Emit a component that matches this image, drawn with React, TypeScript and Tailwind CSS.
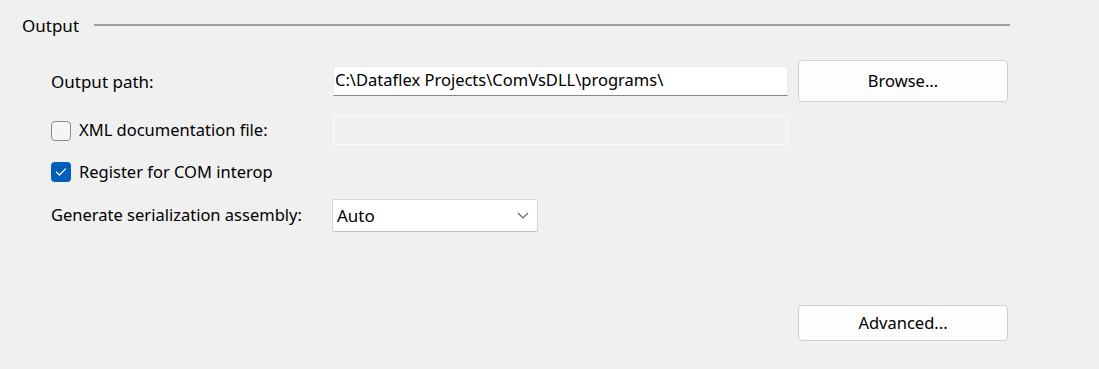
import React from "react";

const font = { fontFamily: '"Noto Sans", "Open Sans", sans-serif' };

export default function App() {
  return (
    <div
      className="w-[1099px] h-[369px] bg-[#f0f0f0] text-black text-[16.5px] leading-none relative overflow-hidden"
      style={font}
    >
      {/* Group header */}
      <div className="flex items-center pl-[22px] pr-[89px] pt-[17px] h-[36px]">
        <span className="leading-none -mt-[3px] text-[17px]">Output</span>
        <div className="flex-1 h-[2px] bg-[#a0a0a0] ml-[15px] -mt-[3px]" />
      </div>

      <div className="flex flex-col pl-[51px] mt-[24px]">
        {/* Row 1 */}
        <div className="flex items-center h-[42px]">
          <div className="w-[282px] text-[17px]">Output path:</div>
          <div className="w-[455px] h-[30px] bg-white border border-[#ececec] border-b-[#868686] flex items-center pl-[1px] -mt-[1px]">
            C:\Dataflex Projects\ComVsDLL\programs\
          </div>
          <button className="ml-[10px] w-[210px] h-[42px] bg-[#fdfdfd] border border-[#d0d0d0] rounded-[4px] flex items-center justify-center">
            Browse...
          </button>
        </div>

        {/* Row 2 */}
        <div className="flex items-center h-[29px] mt-[14px]">
          <div className="w-[282px] flex items-center">
            <div className="w-[20px] h-[20px] rounded-[4px] border border-[#8a8a8a] bg-[#f5f5f5]" />
            <span className="ml-[8px]">XML documentation file:</span>
          </div>
          <div className="w-[455px] h-[29px] border border-[#fbfbfb] bg-[#f0f0f0]" />
        </div>

        {/* Row 3 */}
        <div className="flex items-center h-[20px] mt-[17px]">
          <div className="w-[20px] h-[20px] rounded-[4px] bg-[#005fb8] flex items-center justify-center">
            <svg width="12" height="10" viewBox="0 0 12 10" fill="none">
              <path d="M1.5 5.2 L4.4 8 L10.5 1.8" stroke="white" strokeWidth="1.2" strokeLinecap="round" strokeLinejoin="round" />
            </svg>
          </div>
          <span className="ml-[8px]">Register for COM interop</span>
        </div>

        {/* Row 4 */}
        <div className="flex items-center h-[33px] mt-[17px]">
          <div className="w-[281px]">Generate serialization assembly:</div>
          <div className="w-[206px] h-[33px] bg-white border border-[#d6d6d6] border-b-[#c0c0c0] rounded-[2px] flex items-center justify-between pl-[4px] pr-[8px]">
            <span className="text-[17px]">Auto</span>
            <svg width="12" height="7" viewBox="0 0 12 7" fill="none">
              <path d="M1 1 L6 6 L11 1" stroke="#606060" strokeWidth="1.1" />
            </svg>
          </div>
        </div>

        {/* Advanced */}
        <div className="flex mt-[73px] pl-[747px]">
          <button className="w-[210px] h-[36px] bg-[#fdfdfd] border border-[#d0d0d0] rounded-[4px] flex items-center justify-center">
            Advanced...
          </button>
        </div>
      </div>
    </div>
  );
}
